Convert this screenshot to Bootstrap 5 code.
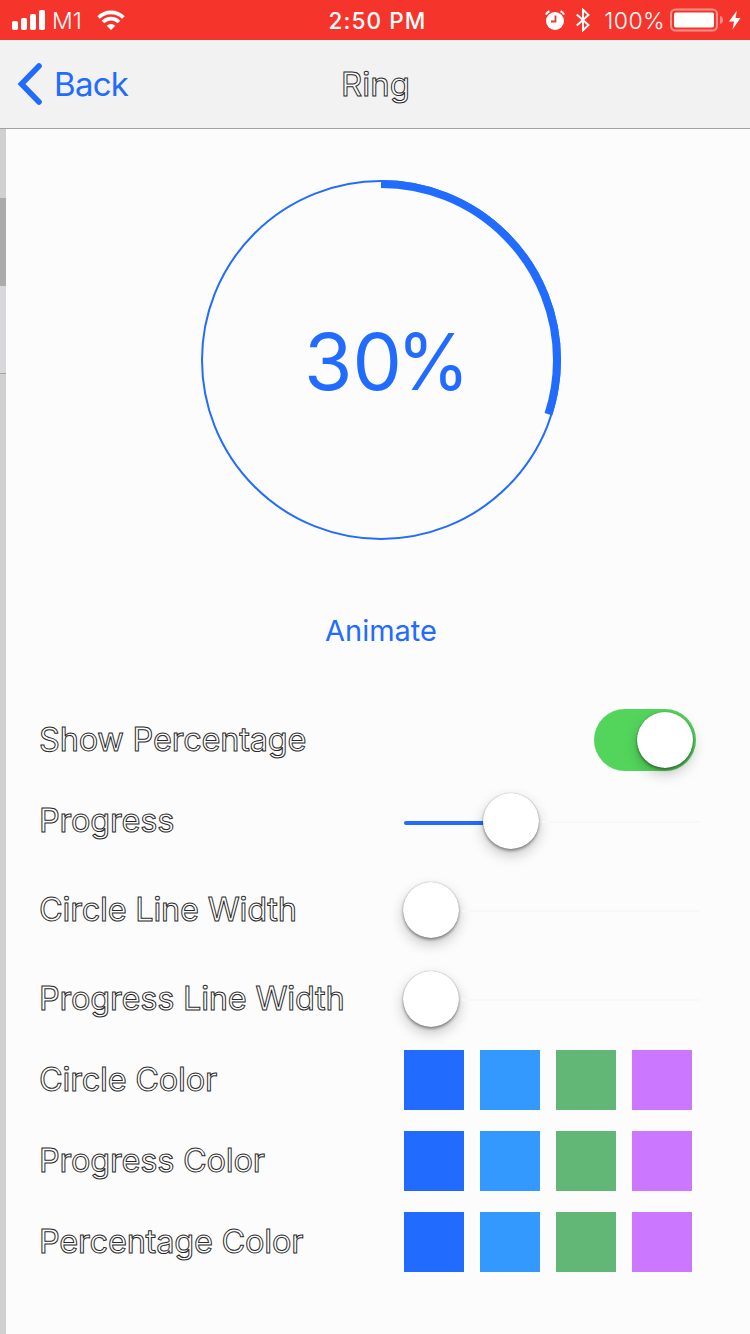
<!DOCTYPE html>
<html lang="en">
<head>
<meta charset="utf-8">
<meta name="viewport" content="width=device-width, initial-scale=1">
<title>Ring</title>
<link href="https://cdn.jsdelivr.net/npm/bootstrap@5.3.0/dist/css/bootstrap.min.css" rel="stylesheet">
<style>
  :root { --tint: #226bff; }
  body { font-family: Inter, "Liberation Sans", sans-serif; background: #fcfcfc; width: 750px; height: 1334px; overflow: hidden; }
  svg { display: block; flex: none; }
  .status { height: 40px; background: #f5352b; color: #fff; font-size: 22px; line-height: 40px; }
  .status > div { flex: 1 1 0; }
  .signal { padding-left: 12px; }
  .carrier { margin-left: 6px; font-size: 23px; padding-top: 1px; }
  .wifi { margin-left: 15px; }
  .clock { font-size: 22.500px; letter-spacing: 1.100px; padding-left: 2px; padding-top: 1px; }
  .power { padding-right: 9px; }
  .charge { margin: 1px 5px 0 13px; font-size: 23px; letter-spacing: .4px; }
  .bolt { margin-left: 5px; }
  .topbar { height: 89px; background: #f2f2f2; border-bottom: 1px solid #a2a2a2; font-size: 33px; }
  .topbar > * { flex: 1 1 0; }
  .back { color: var(--tint); text-decoration: none; padding-left: 17px; gap: 11px; letter-spacing: -.7px; }
  .back span { padding-top: 2px; }
  .heading { padding-right: 16px; padding-top: 2px; }
  .etched { color: #fff; -webkit-text-stroke: 1px #2b2b2b; white-space: nowrap; }
  .edge { width: 6px; flex: none; background: #d0d0d1; }
  .edge-a { height: 69px; }
  .edge-b { height: 88px; background: #ababab; }
  .edge-c { height: 88px; background: #d8d8da; border-bottom: 1px solid #a5a5a5; }
  .ring-box { width: 360px; height: 360px; margin: 51px auto 0 195px; }
  .ring-value { inset: 0; font-size: 78.500px; color: var(--tint); line-height: 1; padding-left: 103px; padding-top: 4px; white-space: nowrap; }
  .digit-a { letter-spacing: 0; }
  .digit-b { letter-spacing: -5.500px; }
  .sign { transform: scaleX(.94); transform-origin: left; }
  .animate { color: var(--tint); font-size: 29px; line-height: 40px; margin: 71px 0 49px 6px; border: 0; padding: 0; width: 738px; }
  .setting { padding-left: 33px; height: 82px; font-size: 32.500px; line-height: 1; letter-spacing: -.22px; }
  .setting .etched { width: 365px; flex: none; }
  .h80 { height: 80px; }
  .h96 { height: 96px; }
  .toggle { width: 102px; height: 62px; background: #53d55c; border-radius: 31px; padding: 3px; margin-left: 190px; }
  .knob { width: 56px; height: 56px; flex: none; background: #fff; border-radius: 50%; box-shadow: 0 2px 3px rgba(0,0,0,.36), 0 6px 14px rgba(0,0,0,.22), 0 0 1px rgba(0,0,0,.4); }
  .at-start { margin-left: -1px; }
  .slide { width: 296px; height: 56px; }
  .fill { height: 4px; background: var(--tint); border-radius: 2px 0 0 2px; margin-top: 4px; }
  .rest { height: 2px; flex: 1; background: #f8f8f8; margin: 2px 0 0 3px; }
  .swatch { width: 60px; height: 60px; }
  .c1 { background: #226bff; } .c2 { background: #3399ff; } .c3 { background: #63b776; } .c4 { background: #cc77ff; }
</style>
</head>
<body class="d-flex flex-column">
<div class="status d-flex">
  <div class="signal d-flex align-items-center">
    <svg width="34" height="20" fill="#fff"><rect x="0" y="11" width="6" height="9" rx="1.8"/><rect x="9" y="8" width="6" height="12" rx="1.8"/><rect x="18" y="4" width="6" height="16" rx="1.8"/><rect x="27" y="0" width="6" height="20" rx="1.8"/></svg>
    <span class="carrier fw-light">M1</span>
    <svg class="wifi" width="28" height="20" viewBox="0 0 28 20" fill="none" stroke="#fff" stroke-width="3.8"><path d="M1.600 7.500a17.500 17.500 0 0 1 24.800 0M6 12a11.300 11.300 0 0 1 16 0"/><path d="M14 20l-4.300-4.300a6 6 0 0 1 8.600 0z" fill="#fff" stroke="none"/></svg>
  </div>
  <div class="clock text-center fw-medium">2:50 PM</div>
  <div class="power d-flex align-items-center justify-content-end">
    <svg width="20" height="20" viewBox="0 0 20 20"><circle cx="10" cy="11" r="9" fill="#fff"/><path d="M1 4.600A6 6 0 0 1 4.500 1.200M15.500 1.200A6 6 0 0 1 19 4.600" stroke="#fff" stroke-width="2.2" fill="none"/><path d="M10.500 5.500v6H6" stroke="#f5352b" stroke-width="1.8" fill="none"/></svg>
    <svg class="ms-2" width="18" height="24" viewBox="-3 0 18 24" fill="none" stroke="#fff" stroke-width="1.9"><path d="M.8 6.500L12.500 17 7 22.300V1.700L12.500 7 .8 17.500"/></svg>
    <span class="charge fw-light">100%</span>
    <svg width="54" height="24" viewBox="0 0 54 24"><rect x="1" y="1.500" width="46" height="21" rx="4.500" fill="none" stroke="#ff918b" stroke-width="2"/><rect x="4" y="4.500" width="40" height="15" rx="2" fill="#fff"/><path d="M50 8c4 1 4 7 0 8z" fill="#ff918b"/></svg>
    <svg class="bolt" width="12" height="20" viewBox="0 0 12 20" fill="#fff"><path d="M8 .5L0 11.500h5L3.500 19.500 11.500 8H6.500z"/></svg>
  </div>
</div>
<nav class="topbar d-flex align-items-center">
  <a href="#" class="back d-flex align-items-center"><svg width="26" height="44" viewBox="0 0 26 44" fill="none" stroke="#226bff" stroke-width="5.6" stroke-linecap="round"><path d="M22 4L4.500 22 22 40"/></svg><span>Back</span></a>
  <div class="heading text-center"><span class="etched">Ring</span></div>
  <div></div>
</nav>
<main class="d-flex flex-fill">
  <aside class="edge"><div class="edge-a"></div><div class="edge-b"></div><div class="edge-c"></div></aside>
  <section class="flex-fill">
    <div class="ring-box position-relative">
      <svg width="360" height="360" fill="none" stroke="#226bff"><circle cx="180" cy="180" r="179" stroke-width="2"/><circle cx="180" cy="180" r="176" stroke-width="8" pathLength="100" stroke-dasharray="30 100" transform="rotate(-90 180 180)"/></svg>
      <div class="ring-value position-absolute d-flex align-items-center"><span class="digit-a">3</span><span class="digit-b">0</span><span class="sign">%</span></div>
    </div>
    <button class="animate d-block bg-transparent text-center">Animate</button>
    <div class="setting h80 d-flex align-items-center"><span class="etched">Show Percentage</span><div class="toggle d-flex justify-content-end"><div class="knob"></div></div></div>
    <div class="setting d-flex align-items-center"><span class="etched">Progress</span><div class="slide d-flex align-items-center"><div class="fill" style="width:79px"></div><div class="knob"></div><div class="rest"></div></div></div>
    <div class="setting h96 d-flex align-items-center"><span class="etched">Circle Line Width</span><div class="slide d-flex align-items-center"><div class="knob at-start"></div><div class="rest"></div></div></div>
    <div class="setting d-flex align-items-center"><span class="etched">Progress Line Width</span><div class="slide d-flex align-items-center"><div class="knob at-start"></div><div class="rest"></div></div></div>
    <div class="setting h80 d-flex align-items-center"><span class="etched">Circle Color</span><div class="d-flex gap-3"><div class="swatch c1"></div><div class="swatch c2"></div><div class="swatch c3"></div><div class="swatch c4"></div></div></div>
    <div class="setting d-flex align-items-center"><span class="etched">Progress Color</span><div class="d-flex gap-3"><div class="swatch c1"></div><div class="swatch c2"></div><div class="swatch c3"></div><div class="swatch c4"></div></div></div>
    <div class="setting h80 d-flex align-items-center"><span class="etched">Percentage Color</span><div class="d-flex gap-3"><div class="swatch c1"></div><div class="swatch c2"></div><div class="swatch c3"></div><div class="swatch c4"></div></div></div>
  </section>
</main>
<script src="https://cdn.jsdelivr.net/npm/bootstrap@5.3.0/dist/js/bootstrap.bundle.min.js"></script>
</body>
</html>
